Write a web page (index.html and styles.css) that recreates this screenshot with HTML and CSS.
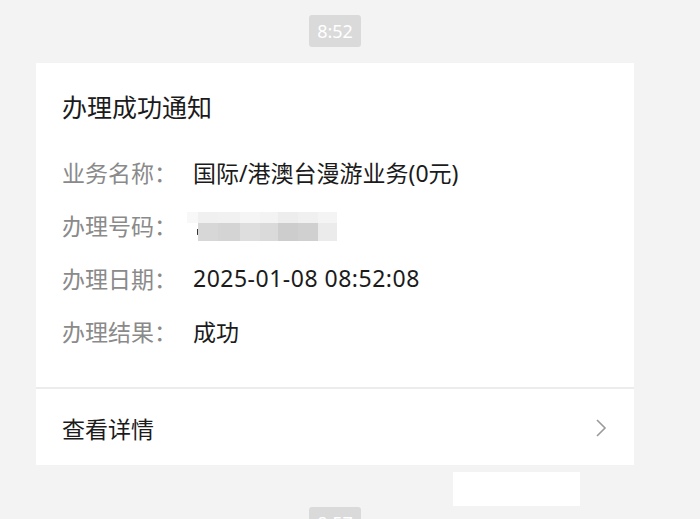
FILE: index.html
```html
<!DOCTYPE html>
<html lang="zh-CN">
<head>
<meta charset="utf-8">
<link rel="stylesheet" href="styles.css">
</head>
<body>
<div class="chat">
  <div class="time-row"><span class="time">8:52</span></div>
  <div class="card">
    <div class="card-body">
      <div class="title">办理成功通知</div>
      <div class="rows">
        <div class="row"><span class="label">业务名称：</span><span class="value">国际/港澳台漫游业务(0元)</span></div>
        <div class="row"><span class="label">办理号码：</span>
          <span class="mosaic">
            <span class="m t1"></span><span class="m t2"></span><span class="m t3"></span><span class="m t4"></span><span class="m t5"></span><span class="m t6"></span><span class="m t7"></span><span class="m t8"></span>
            <span class="m b1"><i class="mark"></i></span><span class="m b2"></span><span class="m b3"></span><span class="m b4"></span><span class="m b5"></span><span class="m b6"></span><span class="m b7"></span><span class="m b8"></span>
          </span>
        </div>
        <div class="row"><span class="label">办理日期：</span><span class="value date">2025-01-08 08:52:08</span></div>
        <div class="row"><span class="label">办理结果：</span><span class="value">成功</span></div>
      </div>
    </div>
    <div class="card-foot">
      <span class="more">查看详情</span>
      <svg class="chev" width="12" height="20" viewBox="0 0 12 20"><path d="M2 2 L10 10 L2 18" fill="none" stroke="#9a9a9a" stroke-width="1.6"/></svg>
    </div>
  </div>
  <div class="bubble-row"><div class="bubble"></div></div>
  <div class="time-row"><span class="time">8:57</span></div>
</div>
</body>
</html>
```
FILE: styles.css
```css
html, body {
  margin: 0;
  padding: 0;
  height: 519px;
  overflow: hidden;
  background: #f3f3f3;
  font-family: "Noto Sans", "Noto Sans CJK SC", sans-serif;
}
.chat {
  width: 598px;
  margin-left: 36px;
  padding-top: 15px;
}
.time-row {
  display: flex;
  justify-content: center;
}
.time {
  display: inline-block;
  width: 52px;
  height: 32px;
  line-height: 32px;
  text-align: center;
  background: #dadada;
  border-radius: 3px;
  color: #ffffff;
  font-size: 18px;
}
.card {
  margin-top: 16px;
  background: #ffffff;
}
.card-body {
  padding: 28px 26px 30px;
}
.title {
  font-size: 25px;
  line-height: 32px;
  color: #1b1b1b;
}
.rows {
  margin-top: 22px;
}
.row {
  display: flex;
  align-items: center;
  height: 53px;
  font-size: 23px;
}
.label {
  width: 131px;
  color: #8a8a8a;
  white-space: nowrap;
}
.value {
  color: #1b1b1b;
  white-space: nowrap;
}
.date {
  letter-spacing: 0.5px;
}
.mosaic {
  display: grid;
  grid-template-columns: 11px 20px 22px 20px 18px 20px 20px 19px;
  grid-template-rows: 11px 18px;
  margin-left: -6px;
  margin-top: 3px;
  filter: blur(0.6px);
}
.m { display: block; position: relative; }
.t1 { background: #f8f8f8; }
.t2 { background: #f0f0f0; }
.t3 { background: #f1f1f1; }
.t4 { background: #f5f5f5; }
.t5 { background: #f3f3f3; }
.t6 { background: #ededed; }
.t7 { background: #f0f0f0; }
.t8 { background: #f4f4f4; }
.b1 { background: #ffffff; }
.b2 { background: #d7d7d7; }
.b3 { background: #d4d4d4; }
.b4 { background: #dedede; }
.b5 { background: #dadada; }
.b6 { background: #cdcdcd; }
.b7 { background: #d0d0d0; }
.b8 { background: #ebebeb; }
.mark {
  position: absolute;
  left: 10px;
  top: 6px;
  width: 14px;
  height: 4px;
  border-left: 2px solid #333;
  border-bottom: 2px solid #555;
}
.card-foot {
  border-top: 2px solid #ececec;
  height: 76px;
  padding: 0 27px 0 26px;
  display: flex;
  align-items: center;
  justify-content: space-between;
}
.more {
  font-size: 23px;
  color: #1b1b1b;
  margin-top: 2px;
}
.chev {
  margin-top: 2px;
}
.bubble-row {
  display: flex;
  justify-content: flex-end;
  padding-right: 54px;
  margin-top: 7px;
}
.bubble {
  width: 127px;
  height: 34px;
  background: #ffffff;
}
.bubble-row + .time-row {
  margin-top: 1px;
}
```
